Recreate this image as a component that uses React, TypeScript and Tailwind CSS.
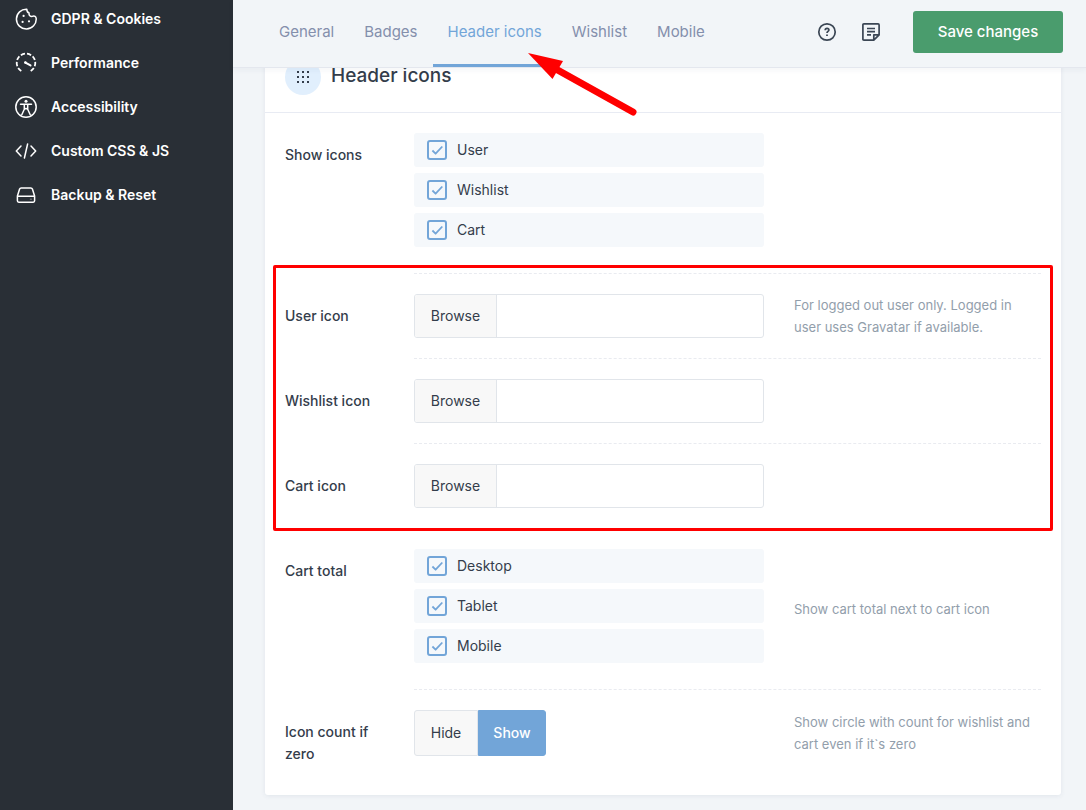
import { useState } from "react";
import type { ReactNode } from "react";

const stroke = {
  fill: "none",
  stroke: "currentColor",
  strokeWidth: 1.5,
  strokeLinecap: "round" as const,
  strokeLinejoin: "round" as const,
};

function CookieIcon() {
  return (
    <svg viewBox="0 0 22 22" className="size-[22px]" {...stroke} aria-hidden="true">
      <path d="M11.800 1.200a9.900 9.900 0 1 0 9.400 9.300c-.3-2.100-1.600-2.900-3.600-2.200-2.300.5-4-.9-3.500-3.300-1.500-.5-2.300-1.800-2.300-3.800z" />
      <g fill="currentColor" stroke="none">
        <circle cx="8.600" cy="7.900" r="1.100" />
        <circle cx="7.600" cy="13.900" r="1.100" />
        <circle cx="14" cy="13.300" r="1.100" />
      </g>
    </svg>
  );
}

function GaugeIcon() {
  return (
    <svg viewBox="0 0 22 22" className="size-[22px]" {...stroke} aria-hidden="true">
      <path
        d="M6.300 19A9.300 9.300 0 1 1 15.700 19"
        pathLength="100"
        strokeDasharray="9 4"
        strokeLinecap="butt"
        strokeWidth="1.800"
      />
      <path d="M10.400 10.600l5.100 2.800" strokeWidth="2" />
      <circle cx="10.400" cy="10.600" r="1.300" fill="currentColor" stroke="none" />
    </svg>
  );
}

function AccessibilityIcon() {
  return (
    <svg viewBox="0 0 22 22" className="size-[22px]" {...stroke} aria-hidden="true">
      <circle cx="11" cy="11" r="10.200" />
      <circle cx="11" cy="5.200" r="1.500" fill="currentColor" stroke="none" />
      <path d="M5.500 8.200h11M9.300 8.400v4.800l-2.500 5.500M12.700 8.400v4.800l2.500 5.500M9.300 13.200l1.700-.8 1.700.8" />
    </svg>
  );
}

function CodeIcon() {
  return (
    <svg viewBox="0 0 22 22" className="size-[22px]" {...stroke} aria-hidden="true">
      <path d="M6 6L1.300 11 6 16M16 6l4.700 5-4.700 5M12.600 4L9.400 18" />
    </svg>
  );
}

function DriveIcon() {
  return (
    <svg viewBox="0 0 22 22" className="size-[22px]" {...stroke} aria-hidden="true">
      <path d="M2.400 12L4.600 5Q5 3.900 6.200 3.900h9.600Q17 3.900 17.400 5l2.200 7M2.400 12.300h17.200v4.500q0 1.400-1.400 1.400H3.800q-1.400 0-1.400-1.400z" />
      <path d="M15.500 15.300h.8" opacity=".3" />
    </svg>
  );
}

function HelpIcon() {
  return (
    <svg viewBox="0 0 20 20" className="size-5" {...stroke} strokeWidth="1.700" aria-hidden="true">
      <circle cx="10" cy="10" r="8.200" />
      <path d="M8.200 8.200c0-2.400 3.700-2.300 3.700-.1 0 1.300-1.900 1.400-1.900 2.800" strokeLinecap="butt" />
      <path d="M9.100 12.400h1.800v1.600H9.100z" fill="currentColor" stroke="none" />
    </svg>
  );
}

function NoteIcon() {
  return (
    <svg viewBox="0 0 20 20" className="size-5" {...stroke} strokeWidth="1.700" aria-hidden="true">
      <path d="M12.800 18.200H2.900q-1 0-1-1V2.900q0-1 1-1h14.200q1 0 1 1v10zM12.800 18v-5.100h5.100" />
      <path d="M6 6.500h8M6 9.700h8M6 12.900h4" strokeLinecap="butt" />
    </svg>
  );
}

function GridIcon() {
  return (
    <svg viewBox="0 0 14 14" className="size-3.5" fill="currentColor" aria-hidden="true">
      {[1, 6, 11].map((y) =>
        [1, 6, 11].map((x) => <rect key={`${x}-${y}`} x={x} y={y} width="2" height="2" />)
      )}
    </svg>
  );
}

const menu = [
  { label: "GDPR & Cookies", icon: <CookieIcon /> },
  { label: "Performance", icon: <GaugeIcon /> },
  { label: "Accessibility", icon: <AccessibilityIcon /> },
  { label: "Custom CSS & JS", icon: <CodeIcon /> },
  { label: "Backup & Reset", icon: <DriveIcon /> },
];

const tabs = ["General", "Badges", "Header icons", "Wishlist", "Mobile"];

function Sidebar() {
  return (
    <nav className="w-[233px] shrink-0 bg-[#292f36] text-white">
      <ul className="-mt-[3px]">
        {menu.map((item) => (
          <li key={item.label}>
            <a href="#" className="flex h-11 items-center gap-3.5 pl-[15px] text-sm font-semibold">
              {item.icon}
              {item.label}
            </a>
          </li>
        ))}
      </ul>
    </nav>
  );
}

function Topbar() {
  const [active, setActive] = useState("Header icons");

  return (
    <header className="sticky top-0 z-10 flex justify-between border-b border-[#e4e7ee] bg-[#f2f5f8] pr-[23px] pl-[31px] shadow-[0_2px_6px_rgba(40,60,90,0.05)]">
      <div className="flex">
        {tabs.map((tab) => (
          <button
            key={tab}
            type="button"
            onClick={() => setActive(tab)}
            className={`h-[67px] border-b-3 px-[15px] text-[15px] whitespace-nowrap ${
              tab === active ? "border-[#72a5d8] text-[#72a5d8]" : "border-transparent text-[#848fac]"
            }`}
          >
            {tab}
          </button>
        ))}
      </div>
      <div className="flex items-center pb-[3px] text-[#3b4654]">
        <button type="button" aria-label="Help" className="mr-6">
          <HelpIcon />
        </button>
        <button type="button" aria-label="Notes" className="mr-8">
          <NoteIcon />
        </button>
        <button
          type="button"
          className="h-[42px] w-[150px] rounded-[3px] bg-[#4a9c6d] text-[15px] font-medium text-white"
        >
          Save changes
        </button>
      </div>
    </header>
  );
}

interface RowProps {
  label: string;
  htmlFor?: string;
  hint?: string;
  last?: boolean;
  children: ReactNode;
}

function Row({ label, htmlFor, hint, last, children }: RowProps) {
  const labelClass = "block w-[129px] shrink-0 pt-[31px] pr-6 text-sm leading-[22px] font-medium";

  return (
    <div className="flex px-5">
      {htmlFor ? (
        <label htmlFor={htmlFor} className={labelClass}>
          {label}
        </label>
      ) : (
        <span className={labelClass}>{label}</span>
      )}
      <div className={`flex flex-1 items-center gap-[30px] py-5 ${last ? "" : "border-b border-dashed border-[#e9ebf0]"}`}>
        <div className="w-[350px] shrink-0">{children}</div>
        {hint && <p className="flex-1 text-[13px] leading-[22px] text-[#929eab]">{hint}</p>}
      </div>
    </div>
  );
}

function Options({ name, items }: { name: string; items: string[] }) {
  return (
    <div role="group" aria-label={name} className="flex flex-col gap-1.5 pb-1.5">
      {items.map((item) => (
        <label key={item} className="flex h-[34px] items-center gap-2.5 rounded-[3px] bg-[#f5f8fb] px-[13px] text-sm">
          <span className="grid size-5 place-items-center text-[#72a5d8]">
            <input
              type="checkbox"
              defaultChecked
              className="peer size-5 appearance-none rounded-[3px] border-2 border-current [grid-area:1/1]"
            />
            <svg
              viewBox="0 0 20 20"
              className="pointer-events-none invisible size-5 [grid-area:1/1] peer-checked:visible"
              {...stroke}
              strokeWidth="1.800"
              strokeLinecap="butt"
              aria-hidden="true"
            >
              <path d="M5.400 10.500l3.200 3.200 6.700-7.200" />
            </svg>
          </span>
          {item}
        </label>
      ))}
    </div>
  );
}

function BrowseField({ id }: { id: string }) {
  return (
    <div className="flex h-11 overflow-hidden rounded-[3px] border border-[#e1e5ea]">
      <button type="button" className="w-[82px] shrink-0 border-r border-[#e1e5ea] bg-[#f8f8f8] text-sm">
        Browse
      </button>
      <input id={id} type="text" className="min-w-0 flex-1 px-3 text-sm outline-none" />
    </div>
  );
}

function ShowHide() {
  const [show, setShow] = useState(true);
  const on = "border-[#72a5d8] bg-[#72a5d8] text-white font-medium";
  const off = "border-[#e1e5ea] bg-[#f8f8f8]";

  return (
    <div className="flex h-[46px] text-sm">
      <button
        type="button"
        onClick={() => setShow(false)}
        className={`w-16 rounded-l-[3px] border ${show ? off : on}`}
      >
        Hide
      </button>
      <button
        type="button"
        onClick={() => setShow(true)}
        className={`w-[68px] rounded-r-[3px] border ${show ? on : off}`}
      >
        Show
      </button>
    </div>
  );
}

export default function App() {
  return (
    <div className="flex min-h-screen bg-[#f2f5f8] font-['Inter',sans-serif] text-[#343d4b]">
      <Sidebar />
      <main className="relative min-w-0 flex-1">
        <Topbar />

        <section className="-mt-[27px] mr-[25px] mb-[15px] ml-8 rounded-[3px] bg-white pb-[19px] shadow-[0_1px_5px_rgba(60,80,110,0.09)]">
          <div className="flex h-[72px] items-center gap-2.5 border-b border-[#e8ebf3] px-5">
            <span className="flex size-9 items-center justify-center rounded-full bg-[#e1effd]">
              <GridIcon />
            </span>
            <h2 className="text-[19px] font-medium">Header icons</h2>
          </div>

          <Row label="Show icons">
            <Options name="Show icons" items={["User", "Wishlist", "Cart"]} />
          </Row>

          {/* Custom icon uploads, framed */}
          <div className="relative">
            <Row label="User icon" htmlFor="user-icon" hint="For logged out user only. Logged in user uses Gravatar if available.">
              <BrowseField id="user-icon" />
            </Row>
            <Row label="Wishlist icon" htmlFor="wishlist-icon">
              <BrowseField id="wishlist-icon" />
            </Row>
            <Row label="Cart icon" htmlFor="cart-icon">
              <BrowseField id="cart-icon" />
            </Row>
            <div className="pointer-events-none absolute inset-x-2 -top-[9px] -bottom-0.5 rounded-[2px] border-3 border-[#ff0000]" />
          </div>

          <Row label="Cart total" hint="Show cart total next to cart icon">
            <Options name="Cart total" items={["Desktop", "Tablet", "Mobile"]} />
          </Row>
          <Row label="Icon count if zero" hint="Show circle with count for wishlist and cart even if it`s zero" last>
            <ShowHide />
          </Row>
        </section>

        {/* Arrow pointing at the active tab */}
        <svg
          viewBox="0 0 110 64"
          className="pointer-events-none absolute top-[53px] left-[295px] z-20 h-16 w-[110px]"
          aria-hidden="true"
        >
          <path d="M0 0L35 8 24.500 26z" fill="#ff0000" />
          <path d="M26 15L105 59" stroke="#ff0000" strokeWidth="7" strokeLinecap="round" />
        </svg>
      </main>
    </div>
  );
}
